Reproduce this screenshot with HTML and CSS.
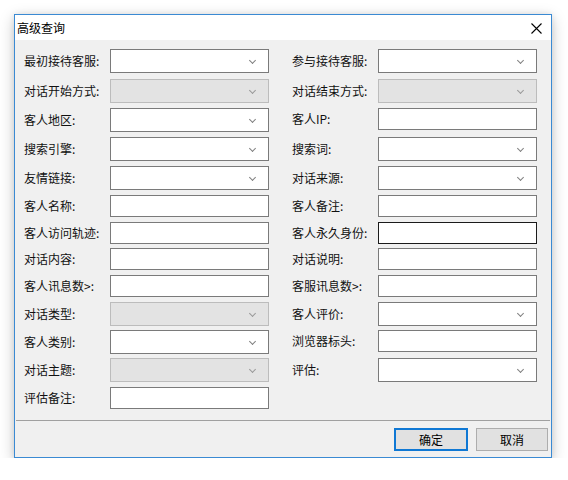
FILE: index.html
```html
<!DOCTYPE html>
<html lang="zh-CN">
<head>
<meta charset="utf-8">
<title>高级查询</title>
<link rel="stylesheet" href="styles.css">
</head>
<body>
<div class="window">
  <div class="titlebar">
    <span class="title">高级查询</span>
    <svg class="close" width="11" height="11" viewBox="0 0 11 11"><path d="M0.5 0.5 L10.5 10.5 M10.5 0.5 L0.5 10.5" stroke="#000" stroke-width="1.1" fill="none"/></svg>
  </div>
  <div class="content">
    <div class="form">
      <div class="field"><label>最初接待客服:</label><div class="combo"><i class="chev"></i></div></div>
      <div class="field"><label>参与接待客服:</label><div class="combo"><i class="chev"></i></div></div>

      <div class="field"><label>对话开始方式:</label><div class="combo disabled"><i class="chev"></i></div></div>
      <div class="field"><label>对话结束方式:</label><div class="combo disabled"><i class="chev"></i></div></div>

      <div class="field"><label>客人地区:</label><div class="combo"><i class="chev"></i></div></div>
      <div class="field"><label>客人IP:</label><div class="text"></div></div>

      <div class="field"><label>搜索引擎:</label><div class="combo"><i class="chev"></i></div></div>
      <div class="field"><label>搜索词:</label><div class="combo"><i class="chev"></i></div></div>

      <div class="field"><label>友情链接:</label><div class="combo"><i class="chev"></i></div></div>
      <div class="field"><label>对话来源:</label><div class="combo"><i class="chev"></i></div></div>

      <div class="field"><label>客人名称:</label><div class="text"></div></div>
      <div class="field"><label>客人备注:</label><div class="text"></div></div>

      <div class="field"><label>客人访问轨迹:</label><div class="text"></div></div>
      <div class="field"><label>客人永久身份:</label><div class="text focused"></div></div>

      <div class="field"><label>对话内容:</label><div class="text"></div></div>
      <div class="field"><label>对话说明:</label><div class="text"></div></div>

      <div class="field"><label>客人讯息数&gt;:</label><div class="text"></div></div>
      <div class="field"><label>客服讯息数&gt;:</label><div class="text"></div></div>

      <div class="field"><label>对话类型:</label><div class="combo disabled"><i class="chev"></i></div></div>
      <div class="field"><label>客人评价:</label><div class="combo"><i class="chev"></i></div></div>

      <div class="field"><label>客人类别:</label><div class="combo"><i class="chev"></i></div></div>
      <div class="field"><label>浏览器标头:</label><div class="text"></div></div>

      <div class="field"><label>对话主题:</label><div class="combo disabled"><i class="chev"></i></div></div>
      <div class="field"><label>评估:</label><div class="combo"><i class="chev"></i></div></div>

      <div class="field"><label>评估备注:</label><div class="text"></div></div>
    </div>
  </div>
  <div class="footer">
    <button class="btn default">确定</button>
    <button class="btn cancel">取消</button>
  </div>
</div>
</body>
</html>
```

FILE: styles.css
```css
html, body {
  margin: 0;
  background: #ffffff;
}
body {
  padding: 14px 0 0 14px;
  font-family: "Noto Sans CJK SC", "Noto Sans", sans-serif;
  font-size: 12px;
  color: #000;
}
.window {
  box-sizing: border-box;
  width: 538px;
  height: 444px;
  border: 1px solid #3a8ad3;
  background: #f0f0f0;
  box-shadow: 0 4px 14px rgba(0, 0, 0, 0.22), 0 0 6px rgba(0, 0, 0, 0.08);
  display: flex;
  flex-direction: column;
}
.titlebar {
  height: 25px;
  background: #ffffff;
  display: flex;
  align-items: center;
  justify-content: space-between;
  padding: 0 9px 0 2px;
}
.title {
  font-size: 12px;
  line-height: 25px;
}
.close {
  display: block;
  margin-top: 1px;
}
.content {
  padding: 9px 0 11px 9px;
}
.form {
  display: grid;
  grid-template-columns: 245px 245px;
  column-gap: 23px;
  grid-template-rows: 30px 29px 29px 29px 29px 27px 26px 27px 27px 28px 28px 29px 22px;
  align-items: start;
}
.field {
  display: flex;
  align-items: center;
}
.field label {
  width: 86px;
  flex: none;
  white-space: nowrap;
  line-height: 16px;
  color: #111;
}
.combo, .text {
  box-sizing: border-box;
  width: 159px;
  background: #fff;
  border: 1px solid #7a7a7a;
  position: relative;
}
.combo {
  height: 24px;
}
.text {
  height: 22px;
}
.text.focused {
  border-color: #1b1b1b;
}
.combo.disabled {
  background: #e3e3e3;
  border-color: #bcbcbc;
}
.chev {
  position: absolute;
  right: 13px;
  top: 8px;
  width: 4px;
  height: 4px;
  border-right: 1px solid #808080;
  border-bottom: 1px solid #808080;
  transform: rotate(45deg);
}
.combo.disabled .chev {
  border-color: #999;
}
.footer {
  flex: 1;
  margin: 0 1px;
  border-top: 1px solid #a0a0a0;
  display: flex;
  justify-content: flex-end;
  align-items: flex-start;
  padding: 7px 2px 0 0;
  gap: 8px;
}
.btn {
  box-sizing: border-box;
  height: 23px;
  font-family: "Noto Sans CJK SC", "Noto Sans", sans-serif;
  font-size: 12px;
  color: #000;
  background: #e1e1e1;
  border: 1px solid #adadad;
  padding: 0;
  line-height: 19px;
}
.btn.default {
  width: 74px;
  border: 2px solid #0f78d4;
}
.btn.cancel {
  width: 72px;
}
```
